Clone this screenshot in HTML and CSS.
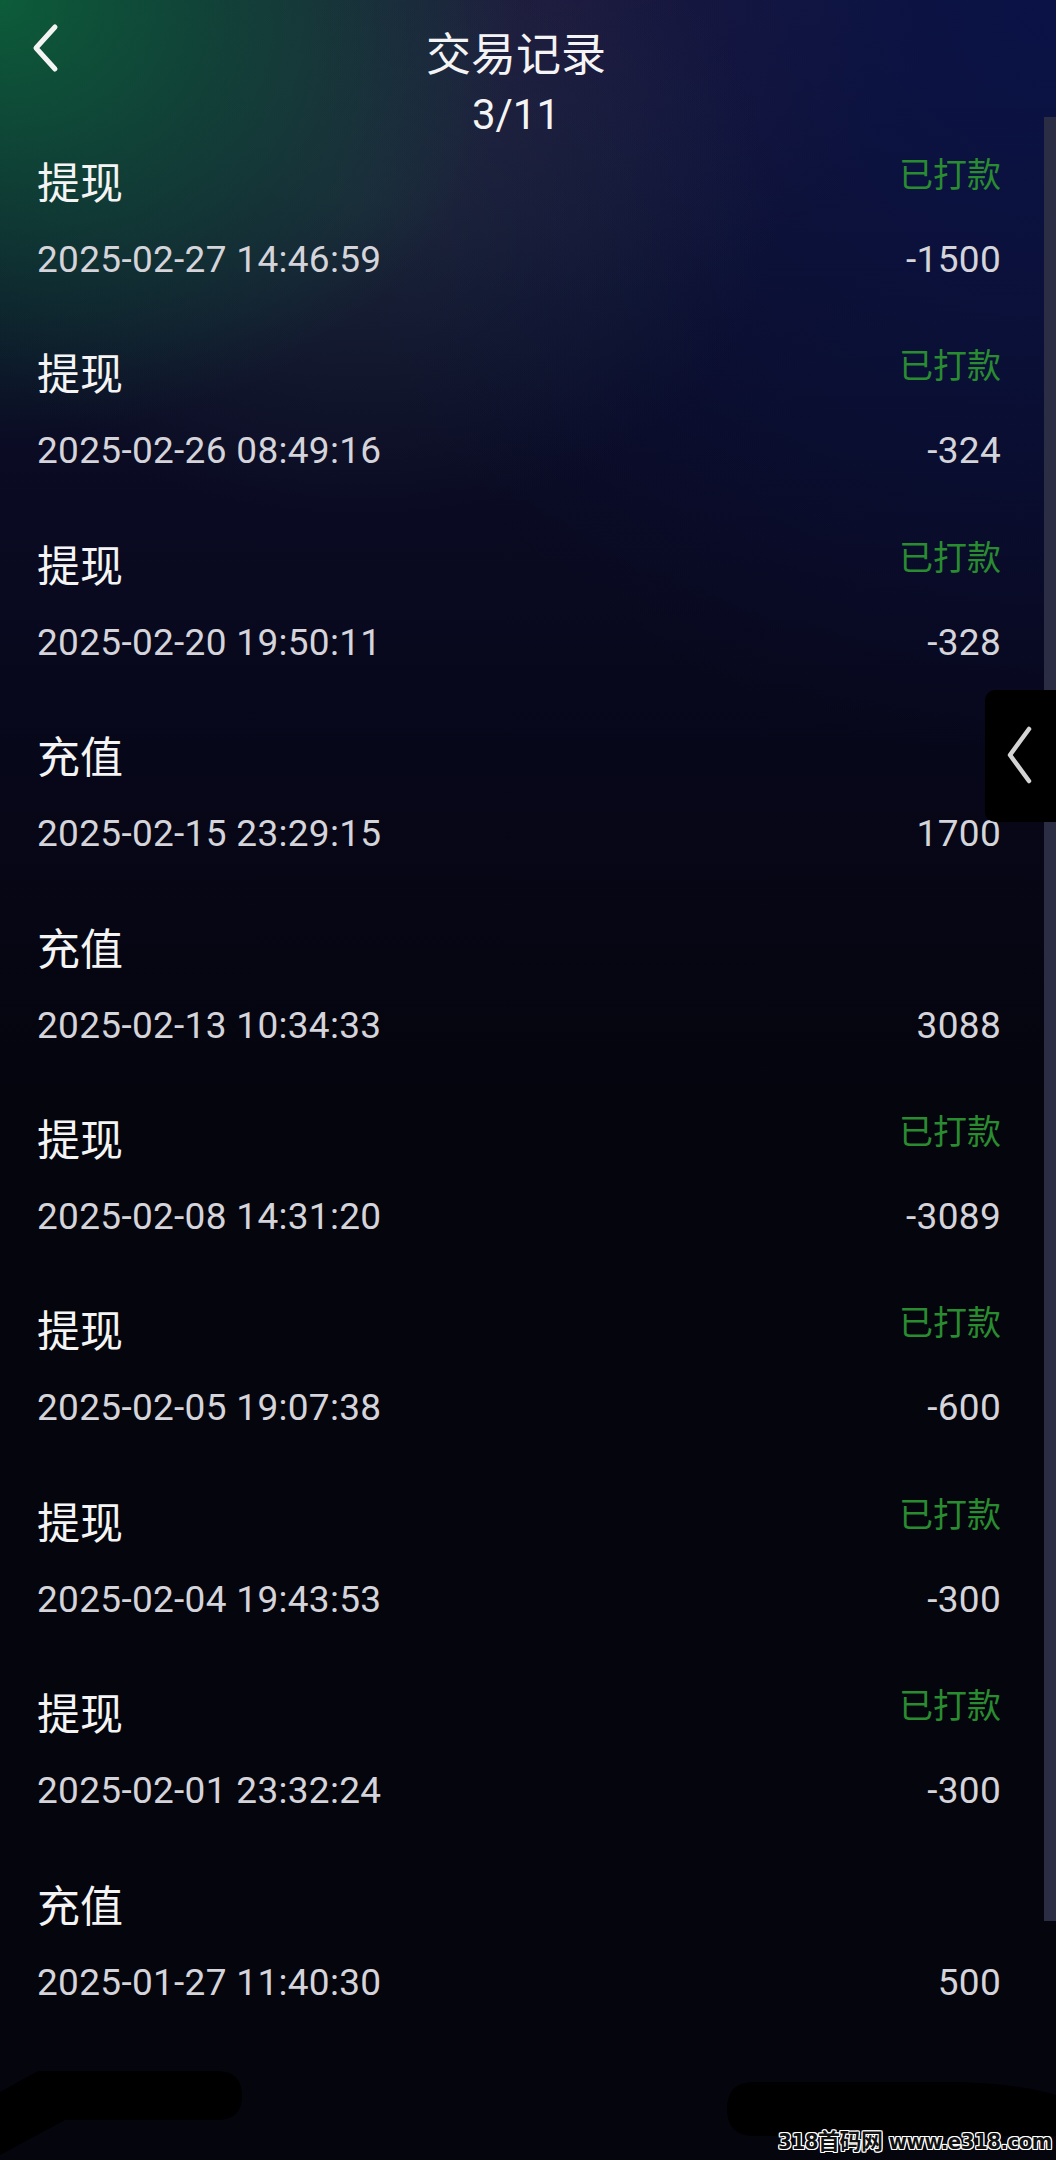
FILE: index.html
```html
<!DOCTYPE html>
<html>
<head>
<meta charset="utf-8"/>
<title>交易记录</title>
<link rel="stylesheet" href="styles.css">
</head>
<body>
<div class="screen">

<div class="header">
  <div class="back">
    <svg width="40" height="60" viewBox="0 0 40 60"><path d="M29 9 L10 30 L29 51" fill="none" stroke="#f4f4f4" stroke-width="5" stroke-linecap="round" stroke-linejoin="round"/></svg>
  </div>
  <div class="heading">
    <div class="title">交易记录</div>
    <div class="pager">3/11</div>
  </div>
  <div></div>
</div>

<div class="list">
  <div class="row">
    <div class="top"><span class="kind">提现</span><span class="status">已打款</span></div>
    <div class="bottom"><span>2025-02-27 14:46:59</span><span>-1500</span></div>
  </div>
  <div class="row">
    <div class="top"><span class="kind">提现</span><span class="status">已打款</span></div>
    <div class="bottom"><span>2025-02-26 08:49:16</span><span>-324</span></div>
  </div>
  <div class="row">
    <div class="top"><span class="kind">提现</span><span class="status">已打款</span></div>
    <div class="bottom"><span>2025-02-20 19:50:11</span><span>-328</span></div>
  </div>
  <div class="row">
    <div class="top"><span class="kind">充值</span></div>
    <div class="bottom"><span>2025-02-15 23:29:15</span><span>1700</span></div>
  </div>
  <div class="row">
    <div class="top"><span class="kind">充值</span></div>
    <div class="bottom"><span>2025-02-13 10:34:33</span><span>3088</span></div>
  </div>
  <div class="row">
    <div class="top"><span class="kind">提现</span><span class="status">已打款</span></div>
    <div class="bottom"><span>2025-02-08 14:31:20</span><span>-3089</span></div>
  </div>
  <div class="row">
    <div class="top"><span class="kind">提现</span><span class="status">已打款</span></div>
    <div class="bottom"><span>2025-02-05 19:07:38</span><span>-600</span></div>
  </div>
  <div class="row">
    <div class="top"><span class="kind">提现</span><span class="status">已打款</span></div>
    <div class="bottom"><span>2025-02-04 19:43:53</span><span>-300</span></div>
  </div>
  <div class="row">
    <div class="top"><span class="kind">提现</span><span class="status">已打款</span></div>
    <div class="bottom"><span>2025-02-01 23:32:24</span><span>-300</span></div>
  </div>
  <div class="row">
    <div class="top"><span class="kind">充值</span></div>
    <div class="bottom"><span>2025-01-27 11:40:30</span><span>500</span></div>
  </div>
</div>

<div class="scrollbar"></div>

<div class="side-tab">
  <svg width="71" height="132" viewBox="0 0 71 132"><path d="M44 39 L25 65 L44 91" fill="none" stroke="#d4d4d4" stroke-width="4.5" stroke-linecap="round" stroke-linejoin="round"/></svg>
</div>

<svg class="redact" width="1056" height="120" viewBox="0 0 1056 120">
  <path d="M0 52 L38 31 L217 31 Q242 31 242 56 Q242 80 217 80 L65 80 L0 115 Z" fill="#000"/>
  <path d="M754 42 L960 42 Q1020 44 1056 55 L1056 96 L754 96 Q727 96 727 69 Q727 42 754 42 Z" fill="#000"/>
</svg>

<div class="watermark">318首码网 www.e318.com</div>

</div>
</body>
</html>
```

FILE: styles.css
```css
html, body {
  margin: 0;
  padding: 0;
}

body {
  background: #05050e;
  font-family: Roboto, "Noto Sans CJK SC", sans-serif;
}

.screen {
  position: relative;
  width: 1056px;
  height: 2160px;
  overflow: hidden;
  background:
    radial-gradient(ellipse 520px 440px at 0 0, rgba(12, 96, 58, 0.95), rgba(12, 96, 58, 0) 100%),
    radial-gradient(ellipse 420px 320px at 360px 200px, rgba(40, 60, 72, 0.45), rgba(40, 60, 72, 0) 100%),
    radial-gradient(ellipse 760px 760px at 1056px 0, rgba(8, 18, 74, 0.85), rgba(8, 18, 74, 0) 100%),
    radial-gradient(ellipse 380px 300px at 560px 0, rgba(44, 30, 60, 0.7), rgba(44, 30, 60, 0) 100%),
    linear-gradient(180deg, #151633 0, #0b0c25 420px, #07071a 760px, #05050e 1100px, #05050e 100%);
}

.header {
  display: grid;
  grid-template-columns: 120px 1fr 120px;
  padding: 22px 24px 10px 0;
  height: 118px;
}

.back svg {
  display: block;
  margin: -4px 0 0 26px;
}

.heading {
  display: flex;
  flex-direction: column;
  align-items: center;
  color: #f4f4f4;
}

.title {
  font-family: "Noto Sans CJK SC", sans-serif;
  font-size: 45px;
  line-height: 60px;
}

.pager {
  margin-top: 8px;
  font-size: 42px;
  line-height: 50px;
}

.row {
  padding: 0 55px 0 37px;
  height: 191.4px;
}

.top {
  display: flex;
  justify-content: space-between;
  align-items: flex-start;
  height: 60px;
}

.kind {
  font-family: "Noto Sans CJK SC", sans-serif;
  font-size: 43px;
  line-height: 60px;
  color: #f4f4f4;
}

.status {
  font-family: "Noto Sans CJK SC", sans-serif;
  font-size: 34px;
  line-height: 46px;
  color: #2a8c30;
}

.bottom {
  display: flex;
  justify-content: space-between;
  margin-top: 25px;
  height: 50px;
  font-size: 37px;
  line-height: 50px;
  letter-spacing: 0.3px;
  color: #d4d4da;
}

.scrollbar {
  position: absolute;
  top: 117px;
  right: 0;
  width: 12px;
  height: 1804px;
  background: #2b2d44;
}

.side-tab {
  position: absolute;
  top: 690px;
  right: 0;
  width: 71px;
  height: 132px;
  background: #000;
  border-radius: 10px 0 0 10px;
}

.side-tab svg {
  display: block;
}

.redact {
  position: absolute;
  left: 0;
  top: 2040px;
}

.watermark {
  position: absolute;
  right: 4px;
  bottom: 6px;
  font-family: "DejaVu Sans Condensed", "Noto Sans CJK SC", sans-serif;
  font-weight: bold;
  font-size: 22px;
  line-height: 24px;
  letter-spacing: -0.5px;
  color: #111;
  text-shadow: 1px 0 #fff, -1px 0 #fff, 0 1px #fff, 0 -1px #fff, 1px 1px #fff, -1px -1px #fff, 1px -1px #fff, -1px 1px #fff;
}
```
